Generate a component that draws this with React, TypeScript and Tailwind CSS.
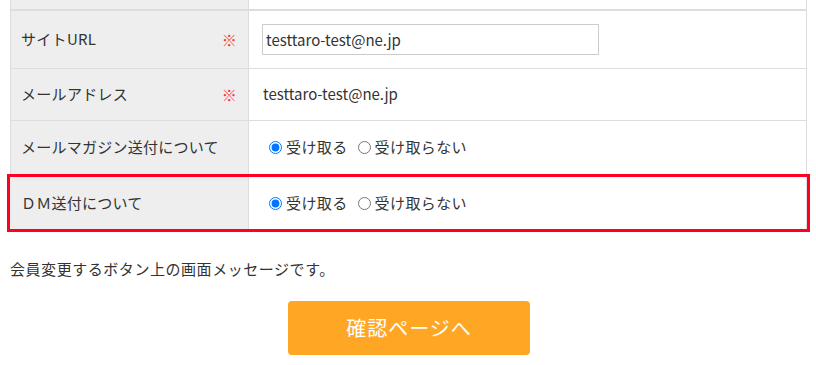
import React from "react"

const font = { fontFamily: '"Noto Sans CJK JP", "Noto Sans", sans-serif' }

function Req() {
  return <span className="text-[#ff3b3b] text-[15px] leading-none">※</span>
}

function RadioPair({ name }: { name: string }) {
  return (
    <div className="flex items-center text-[15px] text-[#333] tracking-[0.4px]">
      <label className="flex items-center gap-[4px]">
        <input type="radio" name={name} defaultChecked className="w-[13px] h-[13px] m-0" />
        受け取る
      </label>
      <label className="flex items-center gap-[4px] ml-[10px]">
        <input type="radio" name={name} className="w-[13px] h-[13px] m-0" />
        受け取らない
      </label>
    </div>
  )
}

export default function App() {
  return (
    <div className="bg-white w-[816px] h-[365px] overflow-hidden text-[#333]" style={font}>

      {/* ===== table ===== */}
      <div className="ml-[10px] w-[797px] border-x border-[#dddddd]">

        {/* cut-off row above */}
        <div className="grid grid-cols-[238px_1fr] h-[11px] border-b-2 border-[#dddddd]">
          <div className="bg-[#eeeeee] border-r border-[#dddddd]" />
          <div />
        </div>

        {/* site url */}
        <div className="grid grid-cols-[238px_1fr] h-[58px] border-b border-[#dddddd]">
          <div className="bg-[#eeeeee] border-r border-[#dddddd] flex items-center justify-between pl-[10px] pr-[11px] text-[15px] tracking-[0.3px]">
            <span>サイトURL</span>
            <Req />
          </div>
          <div className="flex items-center pl-[13px]">
            <input
              type="text"
              defaultValue="testtaro-test@ne.jp"
              className="w-[337px] h-[31px] border border-[#cccccc] px-[3px] text-[15px] text-[#333] outline-none"
              style={font}
            />
          </div>
        </div>

        {/* mail */}
        <div className="grid grid-cols-[238px_1fr] h-[52px] border-b border-[#dddddd]">
          <div className="bg-[#eeeeee] border-r border-[#dddddd] flex items-center justify-between pl-[10px] pr-[11px] text-[15px] tracking-[0.3px]">
            <span>メールアドレス</span>
            <Req />
          </div>
          <div className="flex items-center pl-[14px] text-[15px]">
            testtaro-test@ne.jp
          </div>
        </div>

        {/* magazine */}
        <div className="grid grid-cols-[238px_1fr] h-[53px]">
          <div className="bg-[#eeeeee] border-r border-[#dddddd] flex items-center pl-[10px] text-[15px] tracking-[0.25px]">
            メールマガジン送付について
          </div>
          <div className="flex items-center pl-[20px]">
            <RadioPair name="mag" />
          </div>
        </div>

        {/* DM - highlighted */}
        <div className="-mx-[4px] border-[3px] border-[#ff0022]">
          <div className="grid grid-cols-[239px_1fr] h-[52px]">
            <div className="bg-[#eeeeee] border-r border-[#dddddd] flex items-center pl-[11px] text-[15px] tracking-[0.25px]">
              ＤＭ送付について
            </div>
            <div className="flex items-center pl-[20px]">
              <RadioPair name="dm" />
            </div>
          </div>
        </div>

      </div>

      {/* ===== message ===== */}
      <p className="mt-[25px] pl-[10px] text-[15px] leading-[24px] text-[#333] tracking-[0.55px]">
        会員変更するボタン上の画面メッセージです。
      </p>

      {/* ===== button ===== */}
      <div className="flex justify-center mt-[20px]">
        <button className="w-[242px] h-[54px] rounded-[4px] bg-[#ffa625] text-white text-[20px] tracking-[1px] ml-[2px]" style={font}>
          確認ページへ
        </button>
      </div>

    </div>
  )
}
